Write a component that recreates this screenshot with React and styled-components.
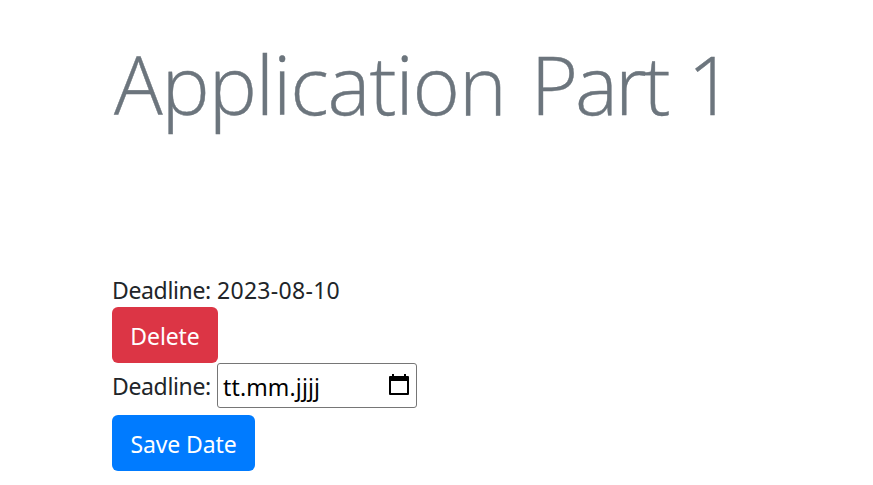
import React from "react";
import styled, { createGlobalStyle } from "styled-components";

const GlobalStyle = createGlobalStyle`
  *, *::before, *::after { box-sizing: border-box; }
  body {
    margin: 0;
    background: #fff;
    color: #212529;
    font-family: "Open Sans", "Noto Sans", sans-serif;
    overflow: hidden;
  }
`;

const Page = styled.main`
  display: flex;
  flex-direction: column;
  align-items: flex-start;
  padding: 33px 0 0 112px;
`;

const Title = styled.h1`
  margin: 0 0 140px;
  padding-left: 2px;
  height: 101px;
  line-height: 101px;
  font-size: 81px;
  font-weight: 300;
  letter-spacing: -1.1px;
  word-spacing: 5px;
  -webkit-text-stroke: 0.4px #6c757d;
  color: #6c757d;
  white-space: nowrap;
`;

const TightWords = styled.span`
  letter-spacing: -3px;
  word-spacing: 2px;
`;

const Text = styled.span`
  display: inline-block;
  font-family: "Noto Sans", sans-serif;
  font-size: 23px;
  line-height: 32px;
  letter-spacing: ${(p) => p.$spacing || 0}px;
  white-space: pre;
`;

const Deadline = styled.div`
  display: flex;
  height: 33px;
`;

const Label = styled(Text)`
  width: 105px;
  letter-spacing: -0.35px;
`;

const Button = styled.button`
  height: 56px;
  width: ${(p) => p.$width}px;
  padding: 1px 0 0;
  border: 0;
  border-radius: 6px;
  background: ${(p) => p.$color};
  color: #fff;
  font: 400 23px "Noto Sans", sans-serif;
  letter-spacing: -0.1px;
  white-space: nowrap;
`;

const Field = styled.div`
  display: flex;
  align-items: center;
  height: 45px;
  margin-bottom: 7px;
`;

const DateBox = styled.div`
  display: flex;
  align-items: center;
  justify-content: space-between;
  width: 200px;
  height: 45px;
  padding: 2px 7px 0 5px;
  border: 1px solid #767676;
  border-radius: 3px;
  color: #000;
`;

const CalendarIcon = styled.svg`
  width: 20px;
  height: 21px;
  margin-bottom: 4px;
`;

export default function App() {
  return (
    <>
      <GlobalStyle />
      <Page>
        <Title>
          Application <TightWords>Part 1</TightWords>
        </Title>
        <Deadline>
          <Label>Deadline:</Label>
          <Text $spacing={0.3}>2023-08-10</Text>
        </Deadline>
        <Button $width={106} $color="#dc3545">Delete</Button>
        <Field>
          <Label>Deadline:</Label>
          <DateBox>
            <Text $spacing={0.15}>tt.mm.jjjj</Text>
            <CalendarIcon viewBox="0 0 20 21">
              <path
                fill="#000"
                fillRule="evenodd"
                d="M3 0h2v2h10V0h2v2h2q1 0 1 1v17q0 1-1 1H1q-1 0-1-1V3q0-1 1-1h2zM2 7v12h16V7z"
              />
            </CalendarIcon>
          </DateBox>
        </Field>
        <Button $width={143} $color="#007bff">Save Date</Button>
      </Page>
    </>
  );
}
